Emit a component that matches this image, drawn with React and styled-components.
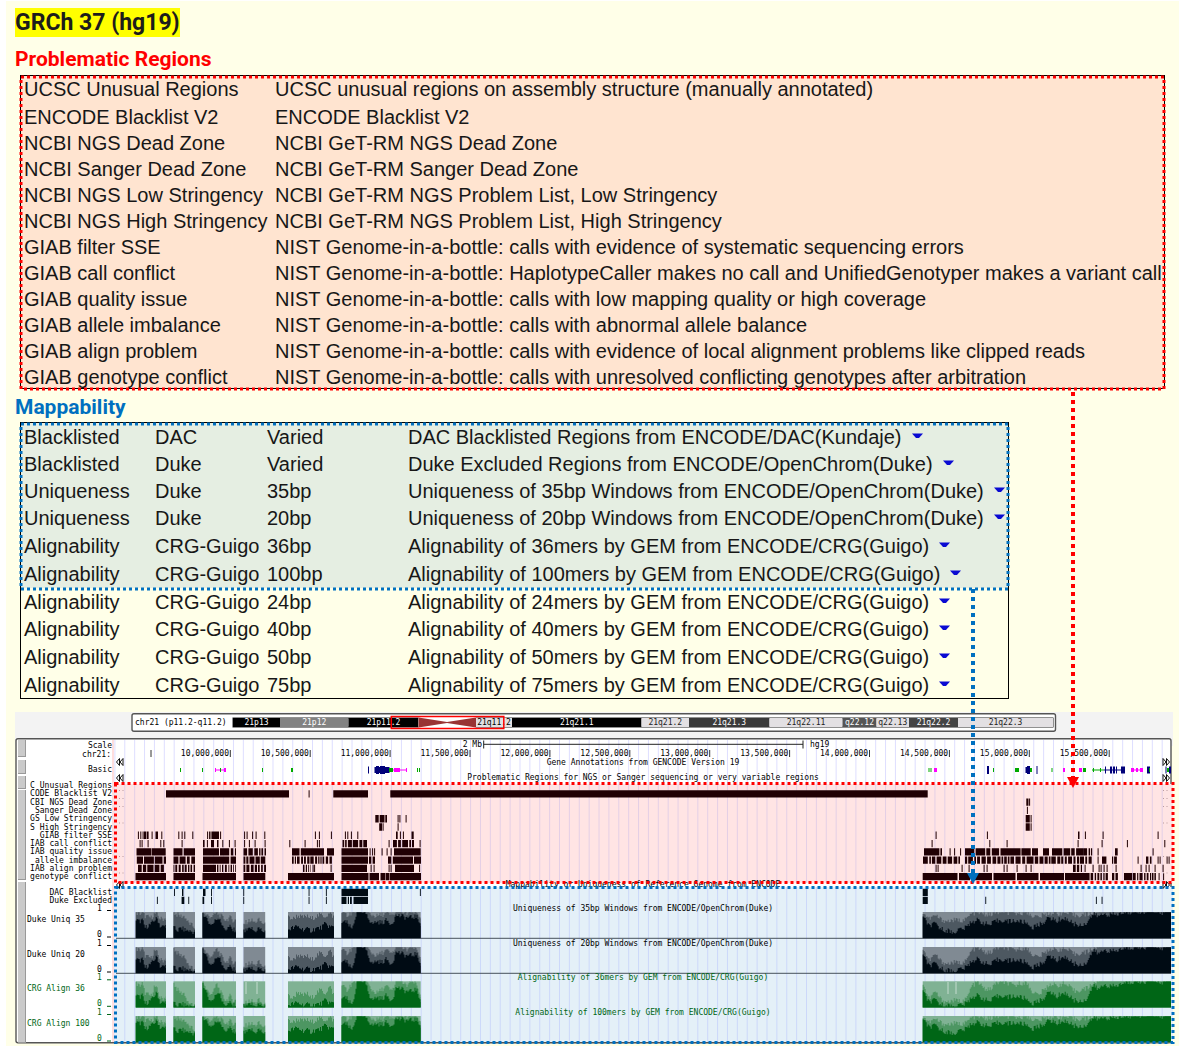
import React from "react";
import styled, { createGlobalStyle } from "styled-components";

const GlobalStyle = createGlobalStyle`
  *, *::before, *::after { box-sizing: border-box; }
  body { margin: 0; background: #fff; color: #171717; font-family: "Liberation Sans", Arial, sans-serif; }
`;

const Page = styled.main`
  margin: 1px 0 0 6px;
  padding: 7px 0 0 9px;
  background: #ffffe8;
`;

const Title = styled.h1`
  margin: 0;
  font: 700 23px/29px Roboto, sans-serif;
`;

const Highlight = styled.mark`
  display: inline-block;
  background: #ffff00;
  color: #1c1c1c;
`;

const SectionTitle = styled.h2`
  margin: ${(p) => p.$top}px 0 0;
  font: 700 21px/28px Roboto, sans-serif;
  color: ${(p) => p.$color};
`;

const TableFrame = styled.div`
  position: relative;
  width: ${(p) => (p.$fit ? "fit-content" : "auto")};
  margin: ${(p) => p.$top}px 14px 0 5px;
  border: 1px solid #000;
`;

const DataTable = styled.table`
  width: ${(p) => (p.$width ? `${p.$width}px` : "100%")};
  border-collapse: collapse;
  table-layout: fixed;
  font-size: 20px;
  line-height: 24px;
  white-space: nowrap;
`;

const Col = styled.col`
  width: ${(p) => (p.$width ? `${p.$width}px` : "auto")};
`;

const RegionRow = styled.tr`
  background: #ffe4d0;
  td { padding: 1px 0 1px 3px; }
  &:first-child td { padding-bottom: 3px; }
  &:last-child td { padding: 2px 0 0 3px; line-height: 22px; }
`;

const MapRow = styled.tr`
  height: ${(p) => p.$height}px;
  background: ${(p) => (p.$active ? "#e5eee2" : "transparent")};
  td { padding: 0 0 0 3px; }
`;

const MenuButton = styled.button`
  margin: 0 0 0 10px;
  padding: 0;
  border: 0;
  background: none;
  line-height: 0;
  vertical-align: 5px;
  cursor: pointer;
`;

const Outline = styled.svg`
  position: absolute;
  z-index: 1;
  top: 1px;
  left: 0;
  width: 100%;
  height: ${(p) => p.$height};
  overflow: visible;
  pointer-events: none;
`;

const Pointer = styled.div`
  position: absolute;
  z-index: 2;
  top: ${(p) => p.$top}px;
  right: ${(p) => p.$right}px;
  display: flex;
  flex-direction: column;
  align-items: center;
  color: ${(p) => p.$color};
  pointer-events: none;
`;

const Shaft = styled.span`
  width: 4px;
  height: ${(p) => p.$length}px;
  background: repeating-linear-gradient(to bottom, currentColor 0 4px, transparent 4px 8px);
`;

const BrowserPanel = styled.figure`
  margin: 13px 0 0;
  line-height: 0;
`;

const Chart = styled.svg`
  display: block;
  width: 100%;
  height: auto;
  overflow: visible;
  font: 8px "DejaVu Sans Mono", monospace;
  text { white-space: pre; }
`;

const RED = "#ff0000";
const BLUE = "#0070c0";

const REGIONS = [
  ["UCSC Unusual Regions", "UCSC unusual regions on assembly structure (manually annotated)"],
  ["ENCODE Blacklist V2", "ENCODE Blacklist V2"],
  ["NCBI NGS Dead Zone", "NCBI GeT-RM NGS Dead Zone"],
  ["NCBI Sanger Dead Zone", "NCBI GeT-RM Sanger Dead Zone"],
  ["NCBI NGS Low Stringency", "NCBI GeT-RM NGS Problem List, Low Stringency"],
  ["NCBI NGS High Stringency", "NCBI GeT-RM NGS Problem List, High Stringency"],
  ["GIAB filter SSE", "NIST Genome-in-a-bottle: calls with evidence of systematic sequencing errors"],
  ["GIAB call conflict", "NIST Genome-in-a-bottle: HaplotypeCaller makes no call and UnifiedGenotyper makes a variant call"],
  ["GIAB quality issue", "NIST Genome-in-a-bottle: calls with low mapping quality or high coverage"],
  ["GIAB allele imbalance", "NIST Genome-in-a-bottle: calls with abnormal allele balance"],
  ["GIAB align problem", "NIST Genome-in-a-bottle: calls with evidence of local alignment problems like clipped reads"],
  ["GIAB genotype conflict", "NIST Genome-in-a-bottle: calls with unresolved conflicting genotypes after arbitration"],
];

const MAPPABILITY = [
  ["Blacklisted", "DAC", "Varied", "DAC Blacklisted Regions from ENCODE/DAC(Kundaje)", 27],
  ["Blacklisted", "Duke", "Varied", "Duke Excluded Regions from ENCODE/OpenChrom(Duke)", 27],
  ["Uniqueness", "Duke", "35bp", "Uniqueness of 35bp Windows from ENCODE/OpenChrom(Duke)", 27],
  ["Uniqueness", "Duke", "20bp", "Uniqueness of 20bp Windows from ENCODE/OpenChrom(Duke)", 28],
  ["Alignability", "CRG-Guigo", "36bp", "Alignability of 36mers by GEM from ENCODE/CRG(Guigo)", 28],
  ["Alignability", "CRG-Guigo", "100bp", "Alignability of 100mers by GEM from ENCODE/CRG(Guigo)", 28],
  ["Alignability", "CRG-Guigo", "24bp", "Alignability of 24mers by GEM from ENCODE/CRG(Guigo)", 27],
  ["Alignability", "CRG-Guigo", "40bp", "Alignability of 40mers by GEM from ENCODE/CRG(Guigo)", 28],
  ["Alignability", "CRG-Guigo", "50bp", "Alignability of 50mers by GEM from ENCODE/CRG(Guigo)", 28],
  ["Alignability", "CRG-Guigo", "75bp", "Alignability of 75mers by GEM from ENCODE/CRG(Guigo)", 27],
];

/* Chromosome bands: start, end, fill, label, label colour */
const BANDS = [
  [233, 280, "#000", "21p13", "#fff"],
  [280, 348.5, "#828282", "21p12", "#fff"],
  [348.5, 418.5, "#000", "21p11.2", "#fff"],
  [476, 512, "#e3e0e3", "21q11.2", "#000"],
  [512, 641.5, "#000", "21q21.1", "#fff"],
  [641.5, 689, "#e3e0e3", "21q21.2", "#222"],
  [689, 769.5, "#3a3a3a", "21q21.3", "#fff"],
  [769.5, 842.5, "#e3e0e3", "21q22.11", "#222"],
  [842.5, 876.5, "#555", "q22.12", "#fff"],
  [876.5, 909, "#e3e0e3", "q22.13", "#222"],
  [909, 958, "#444", "21q22.2", "#fff"],
  [958, 1053, "#e3e0e3", "21q22.3", "#222"],
];

const TRACK_LABELS = [
  "C Unusual Regions", "CODE Blacklist V2", "CBI NGS Dead Zone", "Sanger Dead Zone",
  "GS Low Stringency", "S High Stringency", "GIAB filter SSE", "IAB call conflict",
  "IAB quality issue", "allele imbalance", "IAB align problem", "genotype conflict",
];

/* Per track: solid bars, dense stretches [start, end, fill ratio], single ticks */
const CALLS = [
  { row: 1, bars: [[166, 289], [333.3, 368], [390.3, 927.7]], ticks: [309] },
  { row: 2, bars: [[1026.3, 1028.5]], ticks: [1029.5] },
  { row: 3, ticks: [1027.3] },
  { row: 4, bars: [[375.3, 378.7], [379.7, 384.5], [385.3, 387], [1025.7, 1029.8]], ticks: [398, 399.8, 406, 1031] },
  { row: 5, bars: [[379.2, 382], [1025.7, 1029.8]], ticks: [383, 398, 1031] },
  { row: 6, bars: [[144, 146], [146.6, 148.6], [155.5, 158], [212, 219], [396, 397.7], [411.5, 413.7], [1078, 1079.5]],
    ticks: [138.3, 140.7, 143, 152, 161.7, 178.7, 182, 184.7, 192.7, 207.5, 209.5, 211, 220.5, 244.5, 247, 252.5, 256, 264.7, 315.3, 319.3, 331.3, 345.3, 347.7, 351.3, 357.7, 400.3, 403.3, 936, 987.3, 1085.3, 1103, 1158] },
  { row: 7, bars: [[203, 204.6], [211, 214], [217, 218.5]], dense: [[342.5, 368, 0.7], [393, 414, 0.72]],
    ticks: [140, 142, 148, 160.7, 163.7, 182, 207.3, 222.7, 229.3, 235, 244.5, 249.3, 255, 265, 289.7, 305, 317.3, 319.3, 389, 420, 932, 989.7, 1007, 1078, 1102, 1127.3, 1164.7] },
  { row: 8, bars: [[136.5, 151], [151.5, 165.7], [203, 219], [308, 324], [341.5, 368], [394, 420.7], [924, 937], [1005, 1018]],
    dense: [[173.5, 195, 0.85], [220, 236, 0.75], [243.5, 266, 0.65], [292, 308, 0.8], [327, 334, 0.9], [937, 942, 0.7], [965, 1005, 0.82], [1018, 1038, 0.85], [1043, 1049, 0.8], [1052, 1084, 0.85], [1084, 1093, 0.5], [1115, 1119, 0.7]],
    ticks: [370, 372.5, 374.5, 382, 387, 391, 950, 954.5, 960.5, 1098, 1153] },
  { row: 9, bars: [[203, 217], [341.5, 368], [394, 413]],
    dense: [[136.8, 166, 0.88], [173.5, 195, 0.75], [217, 236, 0.85], [243.5, 266, 0.7], [292, 333, 0.55], [369, 375, 0.5], [388, 394, 0.5], [414, 421, 0.9], [923, 960, 0.6], [965, 1030, 0.65], [1030, 1092, 0.62], [1102, 1108, 0.6], [1112, 1118, 0.6], [1146, 1153, 0.4]],
    ticks: [1098, 1138, 1158, 1160, 1167, 1169] },
  { row: 10, bars: [[203, 216], [341.5, 367], [395, 414]],
    dense: [[138, 166, 0.72], [173.5, 195, 0.4], [217, 236, 0.35], [243.5, 266, 0.55], [303, 311, 0.4], [1073, 1082, 0.6]],
    ticks: [313, 314.5, 331, 371, 374, 389, 391, 419.5, 936, 938, 962, 969, 984, 987, 1004, 1007, 1017, 1026, 1031, 1085, 1093, 1099, 1101, 1104, 1107, 1116, 1141, 1146, 1149, 1155, 1163] },
  { row: 11, bars: [[135.5, 166], [173.5, 195], [202.5, 236], [243.5, 265.3], [288, 334], [341.5, 368.5], [369.5, 379], [380.5, 385.5], [390, 421], [922.7, 957.5], [959, 970], [971, 992], [993.5, 1015.5], [1017, 1038.5], [1040, 1064], [1065, 1088]],
    dense: [[386, 390, 0.6], [1088, 1108, 0.6], [1112, 1119, 0.6], [1124, 1133, 0.85], [1133, 1156, 0.5]],
    ticks: [1159, 1163.5] },
];

const rowY = (row) => 782 + row * 8.27;

/* Repeatable noise, so the stripes stay in place between renders */
const noise = (n) => {
  const v = Math.sin(n * 12.9898) * 43758.5453;
  return v - Math.floor(v);
};

const stripes = ([start, end, fill], seed) => {
  const out = [];
  let x = start;
  let i = 0;
  while (x < end - 0.5) {
    const gap = 0.8 + noise(seed + i * 2.3) * 0.8;
    const bar = Math.min((gap * fill * (0.4 + 1.5 * noise(seed + i * 5.1))) / (1 - fill) + 0.5, end - x);
    out.push([x, x + bar]);
    x += bar + gap;
    i += 1;
  }
  return out;
};

const barPath = (list, y, h) =>
  list.map(([a, b]) => `M${a.toFixed(1)} ${y}H${b.toFixed(1)}V${y + h}H${a.toFixed(1)}Z`).join("");

const BLOCKS = [
  { from: 135.7, to: 166, mid: [0.98, 0.95, 0.98, 0.85, 0.82, 0.8, 0.95, 0.9, 0.75, 0.75, 0.8], dark: [0.7, 0.65, 0.7, 0.4, 0.5, 0.55, 0.7, 0.76, 0.45, 0.45, 0.5] },
  { from: 173.5, to: 195, mid: [0.98, 0.9, 0.85, 0.85, 0.6, 0.5, 0.4], dark: [0.4, 0.3, 0.4, 0.32, 0.3, 0.25, 0.24] },
  { from: 202.5, to: 236, mid: [1, 0.9, 0.85, 0.85, 0.98, 0.9, 0.78, 0.7, 0.8, 0.7, 0.7], dark: [0.98, 0.8, 0.55, 0.55, 0.75, 0.8, 0.4, 0.35, 0.45, 0.3, 0.35] },
  { from: 243.5, to: 265.2, mid: [0.55, 0.65, 0.7, 0.6, 0.72, 0.6, 0.5], dark: [0.25, 0.3, 0.4, 0.25, 0.4, 0.3, 0.2] },
  { from: 288, to: 334, mid: [0.8, 0.75, 0.88, 0.8, 0.85, 0.75, 0.85, 0.9, 0.85, 0.95, 0.8], dark: [0.35, 0.4, 0.45, 0.35, 0.35, 0.3, 0.38, 0.4, 0.55, 0.45, 0.42] },
  { from: 341.5, to: 420.7, mid: [0.95, 0.9, 0.98, 1, 1, 1, 0.9, 0.85, 0.9, 0.95, 0.88, 1, 1, 0.95, 1, 0.98, 0.8], dark: [0.65, 0.6, 0.35, 1, 1, 0.95, 0.55, 0.65, 0.6, 0.7, 0.55, 0.9, 0.85, 0.8, 0.8, 0.85, 0.55] },
  { from: 922.7, to: 1171, mid: [0.98, 0.75, 0.88, 0.72, 0.65, 0.7, 0.68, 0.72, 0.95, 1, 0.92, 0.9, 0.98, 1, 0.98, 0.95, 0.98, 1, 0.88, 0.82, 0.9, 0.98, 0.95, 0.98, 0.95, 0.88, 0.9, 0.92, 0.98, 1, 1, 1, 1, 1, 1, 1, 1, 1, 1, 1, 1, 1],
    dark: [0.8, 0.48, 0.55, 0.35, 0.3, 0.22, 0.35, 0.4, 0.65, 0.7, 0.6, 0.5, 0.66, 0.7, 0.65, 0.68, 0.65, 0.6, 0.42, 0.5, 0.65, 0.8, 0.65, 0.78, 0.7, 0.55, 0.5, 0.6, 0.92, 0.85, 0.95, 0.9, 0.92, 0.97, 0.98, 1, 0.98, 1, 1, 0.97, 1, 1] },
];

const BLACK_SCALE = ["#808a93", "#4d5861", "#000b14"];
const GREEN_SCALE = ["#80b294", "#4d9662", "#006616"];

const SCORES = [
  { top: 912, label: "Duke Uniq 35", title: "Uniqueness of 35bp Windows from ENCODE/OpenChrom(Duke)", ink: "#000", scale: BLACK_SCALE, midPow: 1, darkPow: 1 },
  { top: 947, label: "Duke Uniq 20", title: "Uniqueness of 20bp Windows from ENCODE/OpenChrom(Duke)", ink: "#000", scale: BLACK_SCALE, midPow: 2.4, darkPow: 1.7 },
  { top: 981.3, label: "CRG Align 36", title: "Alignability of 36mers by GEM from ENCODE/CRG(Guigo)", ink: "#006616", scale: GREEN_SCALE, midPow: 3.6, darkPow: 2.1 },
  { top: 1016, label: "CRG Align 100", title: "Alignability of 100mers by GEM from ENCODE/CRG(Guigo)", ink: "#006616", scale: GREEN_SCALE, midPow: 0.9, darkPow: 0.75 },
];

const sample = (points, t) => {
  const p = t * (points.length - 1);
  const i = Math.min(Math.floor(p), points.length - 2);
  return points[i] + (points[i + 1] - points[i]) * (p - i);
};

const areaPath = (block, points, power, bottom, seed) => {
  let d = `M${block.from} ${bottom}`;
  for (let x = block.from; x < block.to; x += 1) {
    const t = (x - block.from) / (block.to - block.from);
    const base = sample(points, t) ** power;
    const jitter = base > 0.99 ? 0 : (noise(Math.floor(x) + seed) - 0.5) * 0.2;
    const h = Math.max(0.04, Math.min(1, base + jitter)) * 26;
    d += `V${(bottom - h).toFixed(1)}H${Math.min(x + 1, block.to).toFixed(1)}`;
  }
  return `${d}V${bottom}Z`;
};

/* Gene models: x, width, height, colour */
const GENES = [
  [180, 1, 4, "#0a0"], [202, 1, 4, "#0a0"], [215, 1, 4, "#f0f"], [216, 10, 1, "#f0f"], [220, 1, 4, "#0a0"], [224, 2, 4, "#f0f"],
  [262, 1, 4, "#0a0"], [291, 2, 4, "#0a0"], [368, 1, 7, "#00007a"], [374.5, 15, 6, "#00007a"], [376, 3, 8, "#00007a"], [380, 5, 8, "#00007a"],
  [389, 4, 4, "#0a0"], [393, 14, 1, "#f0f"], [394, 6, 4, "#f0f"], [406, 1, 4, "#f0f"], [417, 1, 4, "#0a0"], [419, 1, 4, "#0a0"],
  [928.5, 1, 4, "#0a0"], [930.5, 1, 4, "#0a0"], [934, 3, 4, "#f0f"], [987, 2, 8, "#00007a"], [993, 1, 4, "#0a0"], [1015, 4, 4, "#0a0"],
  [1025.5, 2, 6, "#00007a"], [1027, 3, 8, "#00007a"], [1030, 2, 4, "#0a0"], [1036.5, 1, 8, "#00007a"], [1051.5, 1, 4, "#0a0"], [1063, 2, 4, "#f0f"],
  [1079, 3, 4, "#f0f"], [1083, 3, 4, "#0a0"], [1092, 12, 1, "#0a0"], [1093, 1, 4, "#0a0"], [1100, 1, 4, "#0a0"], [1104, 20, 1, "#00007a"],
  [1105, 1, 7, "#00007a"], [1110, 2, 7, "#00007a"], [1113, 2, 7, "#00007a"], [1116, 1, 7, "#00007a"], [1121, 4, 7, "#00007a"],
  [1131, 12, 1, "#f0f"], [1131, 3, 4, "#f0f"], [1136, 2, 4, "#f0f"], [1140, 3, 4, "#f0f"], [1147, 3, 7, "#00007a"], [1149, 1, 4, "#0a0"],
  [1165.5, 1, 7, "#00007a"], [1167, 2, 4, "#0a0"], [1169, 2, 7, "#00007a"],
];

const POSITIONS = [
  "10,000,000", "10,500,000", "11,000,000", "11,500,000", "12,000,000", "12,500,000",
  "13,000,000", "13,500,000", "14,000,000", "14,500,000", "15,000,000", "15,500,000",
];

const HANDLES = [[740, 17], [760, 14], [776, 13], [790, 90], [882, 161]];

const GRID = Array.from({ length: 107 }, (_, i) => 114.4 + i * 9.88);

function DottedOutline({ color, height }) {
  return (
    <Outline $height={height} aria-hidden="true">
      <rect x="0" y="0" width="100%" height="100%" fill="none" stroke={color} strokeWidth="3" strokeDasharray="3 3" />
    </Outline>
  );
}

function DottedPointer({ color, top, right, length }) {
  return (
    <Pointer $top={top} $right={right} $color={color} aria-hidden="true">
      <Shaft $length={length} />
      <svg width="12" height="11" viewBox="0 0 12 11">
        <path d="M0 0H12L6 11Z" fill="currentColor" />
      </svg>
    </Pointer>
  );
}

function Ideogram() {
  return (
    <Chart viewBox="15 712 1164 22">
      <rect x="15" y="712" width="1158" height="27" fill="#f3f3f3" />
      <rect x="132" y="713.7" width="923.5" height="17.5" rx="2" fill="#fff" stroke="#555" strokeWidth="1.4" />
      <text x="135" y="725">chr21 (p11.2-q11.2)</text>
      <rect x="233" y="718" width="820" height="9" fill="#fff" stroke="#222" />
      {BANDS.map(([a, b, fill]) => (
        <rect key={a} x={a} y="718" width={b - a} height="9" fill={fill} />
      ))}
      <rect x="418.5" y="717" width="57.5" height="11" fill="#fff" />
      <path d="M418.5 717.5L447 722L476 717.5V727.5L447 723L418.5 727.5Z" fill="#993333" />
      {BANDS.map(([a, b, , label, ink]) => (
        <text key={a} x={(a + b) / 2} y="725" textAnchor="middle" fill={ink}>{label}</text>
      ))}
      <rect x="391.3" y="716.5" width="112.5" height="12" fill="none" stroke={RED} strokeWidth="1.5" />
    </Chart>
  );
}

function Chevrons({ x, y, flip }) {
  return (
    <path
      transform={`translate(${x} ${y})${flip ? " scale(-1 1)" : ""}`}
      d="M3.5 -3.5L0.5 0L3.5 3.5ZM7 -3.5L4 0L7 3.5Z"
      fill="none"
      stroke="#111"
    />
  );
}

function Tracks() {
  return (
    <Chart viewBox="15 734 1164 312">
      <rect x="15" y="734" width="1158" height="12" fill="#f3f3f3" />
      <rect x="16" y="738.7" width="1155" height="304" rx="2" fill="#fff" stroke="#555" strokeWidth="1.4" />
      {HANDLES.map(([y, h]) => (
        <g key={y}>
          <rect x="18" y={y} width="8" height={h} fill="#999" />
          <rect x="18" y={y} width="7" height={h - 1} fill="#cacaca" />
        </g>
      ))}
      <rect x="112" y="740" width="2" height="302" fill="#ffdede" />
      <rect x="116" y="784" width="1057" height="99" fill="#ffe4e4" />
      <rect x="116" y="887" width="1057" height="155" fill="#e4f0f8" />
      {GRID.map((x) => (
        <g key={x}>
          <rect x={x} y="740" width="1" height="44" fill="#dedeff" />
          <rect x={x} y="784" width="1" height="99" fill="#e4cfe6" />
          <rect x={x} y="887" width="1" height="155" fill="#ccd8fa" />
        </g>
      ))}

      <g textAnchor="end">
        <text x="112" y="748">Scale</text>
        <text x="111" y="757">chr21:</text>
        <text x="112" y="772">Basic</text>
        {TRACK_LABELS.map((label, i) => (
          <text key={label} x="112" y={788 + i * 8.3}>{label}</text>
        ))}
        <text x="112" y="895">DAC Blacklist</text>
        <text x="112" y="903">Duke Excluded</text>
        <text x="482" y="747">2 Mb</text>
        {POSITIONS.map((label, i) => (
          <text key={label} x={229 + i * 79.9} y="756">{label}</text>
        ))}
      </g>
      <path d="M483.7 740.5V748.5M483.7 744.3H803M803 740.5V748.5" stroke="#222" fill="none" />
      <text x="810" y="747">hg19</text>
      <path d={[151, ...POSITIONS.map((_, i) => 230.3 + i * 79.9)].map((x) => `M${x} 750V757`).join("")} stroke="#333" />
      <text x="643" y="765" textAnchor="middle">Gene Annotations from GENCODE Version 19</text>
      <text x="643" y="780" textAnchor="middle">Problematic Regions for NGS or Sanger sequencing or very variable regions</text>

      {GENES.map(([x, w, h, fill]) => (
        <rect key={`${x}-${w}`} x={x} y={770 - h / 2} width={w} height={h} fill={fill} />
      ))}
      <Chevrons x={116} y={762} />
      <Chevrons x={116} y={778} />
      <Chevrons x={1170} y={762} flip />
      <Chevrons x={1170} y={778} flip />
      <Chevrons x={116} y={885} />
      <Chevrons x={1170} y={885} flip />

      {CALLS.map(({ row, bars = [], dense = [], ticks = [] }) => (
        <path
          key={row}
          fill="#200004"
          d={
            barPath(bars, rowY(row), 7.3) +
            barPath(dense.flatMap((s, i) => stripes(s, row * 31 + i * 7)), rowY(row), 7.3) +
            barPath(ticks.map((x) => [x - 0.4, x + 0.6]), rowY(row), 7.3)
          }
        />
      ))}
      <path
        d={[790.5, 798.5, 806.5, 823, 856.5, 873].map((y) => `M119 ${y}h1M122.5 ${y}h1M1163 ${y}h1M1166.5 ${y}h1`).join("")}
        stroke="#b89a9e"
      />

      <path
        fill="#000b14"
        d={
          barPath([[203, 205.5], [341.5, 368], [182, 183.4], [922.7, 927.8]], 888.7, 7.3) +
          barPath([174.5, 211.5, 243.7, 309, 326.3, 420.3].map((x) => [x - 0.4, x + 0.5]), 888.7, 7.3) +
          barPath([[202.5, 204.2], [181.6, 184.3], [341.5, 346.5], [347.8, 349], [350, 351.8], [353.5, 368], [922.7, 927.8]], 896.7, 7.3) +
          barPath([157.3, 188.7, 211.5, 243.7, 309, 326.3, 985.7, 1096.3, 1102].map((x) => [x - 0.4, x + 0.5]), 896.7, 7.3)
        }
      />
      <text x="643" y="887" textAnchor="middle">Mappability or Uniqueness of Reference Genome from ENCODE</text>

      {SCORES.map(({ top, label, title, ink, scale, midPow, darkPow }) => (
        <g key={label}>
          {scale === BLACK_SCALE && <path d={`M116 ${top + 26.3}H1171`} stroke="#46525c" />}
          {BLOCKS.map((block, i) => (
            <g key={block.from}>
              <rect x={block.from} y={top} width={block.to - block.from} height="26.3" fill={scale[0]} />
              <path d={areaPath(block, block.mid, midPow, top + 26.3, i * 17)} fill={scale[1]} />
              <path d={areaPath(block, block.dark, darkPow, top + 26.3, i * 29 + 5)} fill={scale[2]} />
            </g>
          ))}
          <g fill={ink}>
            <text x="27" y={top + 10}>{label}</text>
            <text x="97" y={top - 1}>1</text>
            <text x="97" y={top + 25}>0</text>
            <path d={`M107 ${top - 1.5}h4M107 ${top + 25}h4`} stroke={ink} />
            <text x="643" y={top - 1} textAnchor="middle">{title}</text>
          </g>
        </g>
      ))}
      <path d="M246 982V994M257 982V994M948 982V994M956 982V994" stroke="#c4dccf" />

      <rect x="115.5" y="783.5" width="1057.5" height="99" fill="none" stroke={RED} strokeWidth="3" strokeDasharray="3 3" />
      <rect x="115.5" y="887.5" width="1057.5" height="155" fill="none" stroke={BLUE} strokeWidth="3" strokeDasharray="3 3" />
    </Chart>
  );
}

export default function App() {
  return (
    <>
      <GlobalStyle />
      <Page>
        <Title><Highlight>GRCh 37 (hg19)</Highlight></Title>

        <SectionTitle $color={RED} $top={8}>Problematic Regions</SectionTitle>
        <TableFrame $top={2}>
          <DataTable>
            <colgroup>
              <Col $width={251} />
              <Col />
            </colgroup>
            <tbody>
              {REGIONS.map(([name, text]) => (
                <RegionRow key={name}>
                  <td>{name}</td>
                  <td>{text}</td>
                </RegionRow>
              ))}
            </tbody>
          </DataTable>
          <DottedOutline color={RED} height="100%" />
          <DottedPointer color={RED} top={316} right={85} length={385} />
        </TableFrame>

        <SectionTitle $color={BLUE} $top={4}>Mappability</SectionTitle>
        <TableFrame $top={1} $fit>
          <DataTable $width={987}>
            <colgroup>
              <Col $width={131} />
              <Col $width={112} />
              <Col $width={141} />
              <Col />
            </colgroup>
            <tbody>
              {MAPPABILITY.map(([kind, source, size, text, height], i) => (
                <MapRow key={text} $height={height} $active={i < 6}>
                  <td>{kind}</td>
                  <td>{source}</td>
                  <td>{size}</td>
                  <td>
                    {text}
                    <MenuButton type="button" aria-label={`Options for ${text}`}>
                      <svg width="11" height="6" viewBox="0 0 11 6">
                        <path d="M0 0.5H11L7 5H4Z" fill="#0a0ad2" />
                      </svg>
                    </MenuButton>
                  </td>
                </MapRow>
              ))}
            </tbody>
          </DataTable>
          <DottedOutline color={BLUE} height="165px" />
          <DottedPointer color={BLUE} top={166} right={29} length={284} />
        </TableFrame>

        <BrowserPanel aria-label="Genome browser view of chr21">
          <Ideogram />
          <Tracks />
        </BrowserPanel>
      </Page>
    </>
  );
}
